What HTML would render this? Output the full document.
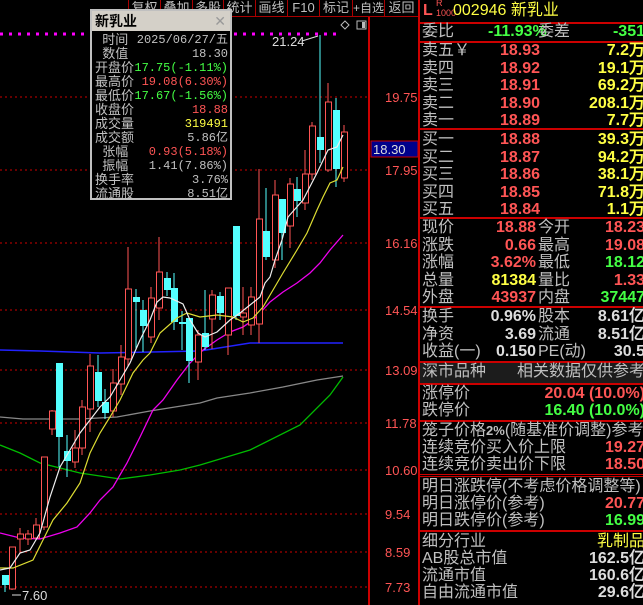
<!DOCTYPE html>
<html><head><meta charset="utf-8"><style>
*{margin:0;padding:0;box-sizing:border-box}
body{width:643px;height:605px;background:#000;overflow:hidden;position:relative;font-family:"Liberation Sans","Noto Sans CJK SC",sans-serif;}
.abs{position:absolute}
.tb{position:absolute;top:0;height:17px;border-left:1px solid #a00;border-bottom:1px solid #a00;color:#c0c0c0;font-size:13px;line-height:16px;text-align:center;overflow:hidden;white-space:nowrap;background:#000}
#pop{left:90px;top:9px;width:142px;height:191px;background:#000;border:2px solid #c0c0c0;}
#pop .hd{height:20px;background:#d4d0c8;color:#000;font-weight:bold;font-size:14px;line-height:20px;padding-left:3px}
#pop .r{position:absolute;left:0;width:136px;height:14px;font-size:13px;line-height:14px;color:#c0c0c0}
#pop .r .l{position:absolute;left:3px}
#pop .r .v{position:absolute;right:0;font-family:"Liberation Mono",monospace;font-size:12px}
#rp{left:418px;top:0;width:225px;height:605px;border-left:2px solid #c00}
.row{position:absolute;left:0;width:225px;height:18px;font-size:16px;line-height:18px;color:#c0c0c0;white-space:nowrap}
.row span{position:absolute}
.hl{position:absolute;left:0;width:225px;height:2px;background:#c00}
.red{color:#ff5555}.grn{color:#44ff44}.yel{color:#ffff44}.wht{color:#ddd}
.n{font-weight:bold;font-family:"Liberation Sans",sans-serif}
</style></head><body>
<svg class="abs" style="left:0;top:0" width="418" height="605">
<g stroke="#c00" stroke-dasharray="2,3" stroke-width="1">
<line x1="0" y1="97" x2="368" y2="97"/><line x1="0" y1="170" x2="368" y2="170"/><line x1="0" y1="243" x2="368" y2="243"/><line x1="0" y1="310" x2="368" y2="310"/><line x1="0" y1="370" x2="368" y2="370"/><line x1="0" y1="423" x2="368" y2="423"/><line x1="0" y1="470" x2="368" y2="470"/><line x1="0" y1="514" x2="368" y2="514"/><line x1="0" y1="552" x2="368" y2="552"/><line x1="0" y1="587" x2="368" y2="587"/>
</g>
<line x1="0" y1="34" x2="340" y2="34" stroke="#f0f" stroke-width="3" stroke-dasharray="3,6"/>
<line x1="369" y1="0" x2="369" y2="605" stroke="#c00" stroke-width="2"/>
<polyline fill="none" stroke="#888" stroke-width="1.3" points="0,417 23,419 80,419 117,417 150,411 200,403 217,398 250,393 283,387 317,380 343,376"/>
<polyline fill="none" stroke="#0b0" stroke-width="1.3" points="0,445 20,453 40,463 80,473 120,479 150,475 180,470 200,465 250,450 300,425 330,395 343,377"/>
<polyline fill="none" stroke="#22f" stroke-width="1.5" points="0,350 40,351 100,353 200,351 250,343 343,343"/>
<polyline fill="none" stroke="#e0e" stroke-width="1.3" points="0,533 20,538 40,539 60,533 77,527 90,513 100,500 113,487 127,463 140,437 153,410 163,400 177,380 190,363 203,350 217,340 230,332 243,327 253,320 260,313 270,302 283,292 297,283 310,273 320,263 330,250 343,235"/>
<g id="candles"></g>
<polyline fill="none" stroke="#dd3" stroke-width="1.2" points="0,568 13,568 33,560 43,540 53,520 67,503 80,483 90,453 100,433 110,417 120,400 133,373 143,360 150,353 160,333 177,318 187,313 200,317 217,315 233,317 243,322 253,318 263,307 273,290 283,273 297,250 307,233 317,210 323,197 330,183 337,180 343,167"/>
<polyline fill="none" stroke="#eee" stroke-width="1.2" points="0,570 10,568 20,553 30,550 40,533 50,497 60,467 70,450 80,433 90,420 100,407 110,397 120,380 130,363 140,340 150,320 157,302 163,297 170,298 183,304 190,320 198,333 205,337 217,332 230,320 240,313 250,305 260,297 265,283 270,277 275,260 282,240 288,217 303,200 317,173 328,150 337,147 343,135"/>
<text x="272" y="46" fill="#ddd" font-size="13" font-family="Liberation Sans">21.24</text>
<line x1="302" y1="41" x2="318" y2="36" stroke="#ddd"/>
<text x="22" y="600" fill="#ddd" font-size="13" font-family="Liberation Sans">7.60</text>
<line x1="12" y1="595" x2="21" y2="595" stroke="#ddd"/>
<path d="M341 25 l4 -4 l4 4 l-4 4z" fill="none" stroke="#bbb"/>
<rect x="357" y="21" width="9" height="8" fill="none" stroke="#bbb"/><rect x="362" y="22" width="3" height="6" fill="#bbb"/>
<rect x="371" y="141" width="47" height="16" fill="#00008b" stroke="#c00"/>
<text x="373" y="154" fill="#ddd" font-size="13" font-family="Liberation Sans">18.30</text>
<g fill="#ff5555" font-size="13" font-family="Liberation Sans">
<text x="385" y="102">19.75</text><text x="385" y="175">17.95</text><text x="385" y="248">16.16</text><text x="385" y="315">14.54</text><text x="385" y="375">13.09</text><text x="385" y="428">11.78</text><text x="385" y="475">10.60</text><text x="385" y="519">9.54</text><text x="385" y="557">8.59</text><text x="385" y="592">7.73</text>
</g>
</svg>
<div class="tb" style="left:128px;width:32px">复权</div><div class="tb" style="left:160px;width:32px">叠加</div><div class="tb" style="left:192px;width:31px">多股</div><div class="tb" style="left:223px;width:32px">统计</div><div class="tb" style="left:255px;width:32px">画线</div><div class="tb" style="left:287px;width:32px">F10</div><div class="tb" style="left:319px;width:33px">标记</div><div class="tb" style="left:352px;width:32px;font-size:12px">+自选</div><div class="tb" style="left:384px;width:34px">返回</div>
<div id="pop" class="abs"><div class="hd">新乳业<span style="position:absolute;right:4px;color:#999;font-weight:normal">✕</span></div>
<div class="r" style="top:22px"><span class="l">&nbsp;&nbsp;时间</span><span class="v">2025/06/27/五</span></div>
<div class="r" style="top:36px"><span class="l">&nbsp;&nbsp;数值</span><span class="v">18.30</span></div>
<div class="r" style="top:50px"><span class="l">开盘价</span><span class="v grn">17.75(-1.11%)</span></div>
<div class="r" style="top:64px"><span class="l">最高价</span><span class="v red">19.08(6.30%)</span></div>
<div class="r" style="top:78px"><span class="l">最低价</span><span class="v grn">17.67(-1.56%)</span></div>
<div class="r" style="top:92px"><span class="l">收盘价</span><span class="v red">18.88</span></div>
<div class="r" style="top:106px"><span class="l">成交量</span><span class="v yel">319491</span></div>
<div class="r" style="top:120px"><span class="l">成交额</span><span class="v">5.86亿</span></div>
<div class="r" style="top:134px"><span class="l">&nbsp;&nbsp;张幅</span><span class="v red">0.93(5.18%)</span></div>
<div class="r" style="top:148px"><span class="l">&nbsp;&nbsp;振幅</span><span class="v">1.41(7.86%)</span></div>
<div class="r" style="top:162px"><span class="l">换手率</span><span class="v">3.76%</span></div>
<div class="r" style="top:176px"><span class="l">流通股</span><span class="v">8.51亿</span></div>
</div>
<div id="rp" class="abs">
<div class="row" style="top:2px"><span class="red" style="left:3px;font-weight:bold">L</span><span class="red" style="left:16px;top:-4px;font-size:9px;line-height:10px">R<br>1000</span><span class="yel" style="left:33px">002946 新乳业</span></div>
<div class="hl" style="top:22px"></div>
<div class="row" style="top:23px"><span style="left:2px">委比</span><span class="grn n" style="left:68px">-11.93%</span><span style="left:118px">委差</span><span class="grn n" style="right:0">-351</span></div>
<div class="hl" style="top:41px"></div>
<div id="q"></div>
</div>
<script>
var q='',rows=[['卖五￥','18.93','7.2万'],['卖四','18.92','19.1万'],['卖三','18.91','69.2万'],['卖二','18.90','208.1万'],['卖一','18.89','7.7万']];
var t=42;rows.forEach(function(r){q+='<div class="row" style="top:'+t+'px"><span style="left:2px">'+r[0]+'</span><span class="red n" style="left:80px">'+r[1]+'</span><span class="yel n" style="right:0">'+r[2]+'</span></div>';t+=17.5});
q+='<div class="hl" style="top:128px"></div>';
rows=[['买一','18.88','39.3万'],['买二','18.87','94.2万'],['买三','18.86','38.1万'],['买四','18.85','71.8万'],['买五','18.84','1.1万']];
t=131;rows.forEach(function(r){q+='<div class="row" style="top:'+t+'px"><span style="left:2px">'+r[0]+'</span><span class="red n" style="left:80px">'+r[1]+'</span><span class="yel n" style="right:0">'+r[2]+'</span></div>';t+=17.5});
q+='<div class="hl" style="top:217px"></div>';
rows=[['现价','18.88','red','今开','18.23','red'],['涨跌','0.66','red','最高','19.08','red'],['涨幅','3.62%','red','最低','18.12','grn'],['总量','81384','yel','量比','1.33','red'],['外盘','43937','red','内盘','37447','grn']];
t=219;rows.forEach(function(r){q+='<div class="row" style="top:'+t+'px"><span style="left:2px">'+r[0]+'</span><span class="'+r[2]+' n" style="right:109px">'+r[1]+'</span><span style="left:118px">'+r[3]+'</span><span class="'+r[5]+' n" style="right:0">'+r[4]+'</span></div>';t+=17.5});
q+='<div class="hl" style="top:306px"></div>';
rows=[['换手','0.96%','股本','8.61亿'],['净资','3.69','流通','8.51亿'],['收益(一)','0.150','PE(动)','30.5']];
t=308;rows.forEach(function(r){q+='<div class="row" style="top:'+t+'px"><span style="left:2px">'+r[0]+'</span><span class="wht n" style="right:109px">'+r[1]+'</span><span style="left:118px">'+r[2]+'</span><span class="wht n" style="right:0">'+r[3]+'</span></div>';t+=17.5});
q+='<div class="hl" style="top:361px"></div>';
q+='<div class="row" style="top:363px;height:20px;background:#1c1c1c"><span style="left:2px">深市品种</span><span style="right:0">相关数据仅供参考</span></div>';
q+='<div class="hl" style="top:383px"></div>';
q+='<div class="row" style="top:385px"><span style="left:2px">涨停价</span><span class="red n" style="right:0">20.04 (10.0%)</span></div>';
q+='<div class="row" style="top:402px"><span style="left:2px">跌停价</span><span class="grn n" style="right:0">16.40 (10.0%)</span></div>';
q+='<div class="hl" style="top:420px"></div>';
q+='<div class="row" style="top:422px"><span style="left:2px">笼子价格<b style="font-size:13px">2%</b>(随基准价调整)参考</span></div>';
q+='<div class="row" style="top:439px"><span style="left:2px">连续竞价买入价上限</span><span class="red n" style="right:0">19.27</span></div>';
q+='<div class="row" style="top:456px"><span style="left:2px">连续竞价卖出价下限</span><span class="red n" style="right:0">18.50</span></div>';
q+='<div class="hl" style="top:474px;height:1px"></div><div class="hl" style="top:476px;height:1px"></div>';
q+='<div class="row" style="top:478px"><span style="left:2px">明日涨跌停(不考虑价格调整等)</span></div>';
q+='<div class="row" style="top:495px"><span style="left:2px">明日涨停价(参考)</span><span class="red n" style="right:0">20.77</span></div>';
q+='<div class="row" style="top:512px"><span style="left:2px">明日跌停价(参考)</span><span class="grn n" style="right:0">16.99</span></div>';
q+='<div class="hl" style="top:530px"></div>';
q+='<div class="row" style="top:533px"><span style="left:2px">细分行业</span><span class="yel" style="right:0">乳制品</span></div>';
q+='<div class="row" style="top:550px"><span style="left:2px">AB股总市值</span><span class="wht n" style="right:0">162.5亿</span></div>';
q+='<div class="row" style="top:567px"><span style="left:2px">流通市值</span><span class="wht n" style="right:0">160.6亿</span></div>';
q+='<div class="row" style="top:584px"><span style="left:2px">自由流通市值</span><span class="wht n" style="right:0">29.6亿</span></div>';
document.getElementById('q').innerHTML=q;
var C=[['c',2,575,585,575,592],['r',9,547,589,547,590],['r',17,534,539,528,553],['r',25,534,539,530,545],['r',33,525,538,518,538],['r',41,457,527,457,530],['r',49,411,429,410,435],['c',56,363,437,363,467],['c',64,451,461,435,477],['r',72,448,462,430,468],['r',79,407,448,400,455],['r',87,366,409,354,432],['c',95,372,401,355,407],['c',102,402,413,389,419],['r',110,383,411,369,417],['r',118,357,384,345,395],['r',125,289,359,247,367],['c',133,297,302,289,350],['c',140,310,326,300,352],['r',148,298,337,287,343],['r',156,272,308,237,320],['c',164,278,290,272,296],['c',171,288,322,273,330],['c',179,322,324,311,350],['c',186,318,361,317,383],['r',195,335,362,330,380],['c',202,333,347,290,350],['r',209,295,319,290,349],['c',217,296,313,292,320],['r',225,288,335,288,355],['c',233,226,316,226,320],['r',240,313,317,287,335],['r',248,297,325,287,335],['r',256,219,324,169,343],['c',263,231,257,188,260],['r',272,195,260,180,268],['c',279,199,233,199,260],['r',287,184,226,178,248],['c',294,189,201,177,217],['r',302,174,203,150,210],['r',309,126,174,122,180],['c',317,137,150,35,163],['r',325,102,170,83,172],['c',333,110,169,98,187],['r',341,132,178,125,182]];
var s='';C.forEach(function(k){var col=k[0]=='r'?'#ff5555':'#54ffff',x=k[1]+3;
s+='<line x1="'+x+'" y1="'+k[4]+'" x2="'+x+'" y2="'+k[2]+'" stroke="'+col+'"/><line x1="'+x+'" y1="'+k[3]+'" x2="'+x+'" y2="'+k[5]+'" stroke="'+col+'"/>';
if(k[0]=='r')s+='<rect x="'+(k[1]+0.5)+'" y="'+k[2]+'" width="6" height="'+Math.max(1,k[3]-k[2])+'" fill="#000" stroke="'+col+'"/>';
else s+='<rect x="'+k[1]+'" y="'+k[2]+'" width="7" height="'+Math.max(1,k[3]-k[2])+'" fill="'+col+'"/>';});
document.getElementById('candles').innerHTML=s;
</script>
</body></html>
